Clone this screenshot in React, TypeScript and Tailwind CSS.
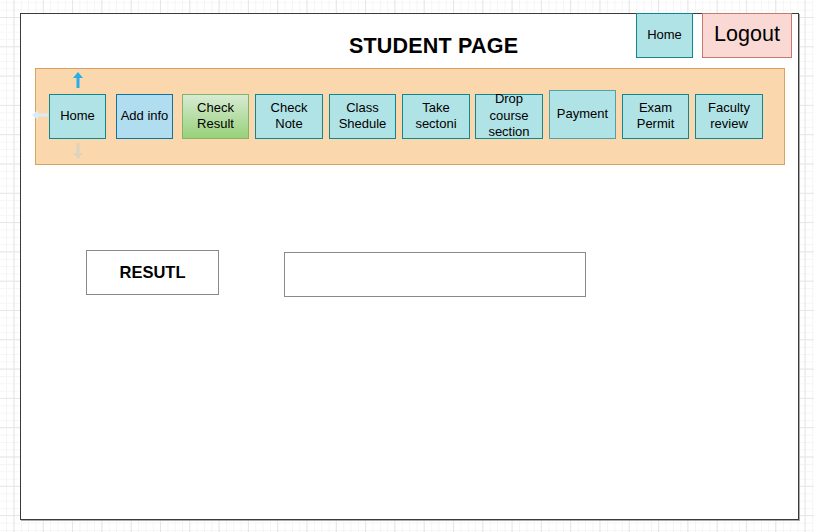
const NAV = [
  { label: "Home", cls: "ml-[13px] w-[57px] h-[45px] bg-[#b0e3e6] border-[#12868e]" },
  { label: "Add info", cls: "ml-[10px] w-[57px] h-[45px] bg-[#b1ddf0] border-[#10739e]" },
  {
    label: "Check\nResult",
    cls: "ml-[9px] w-[67px] h-[45px] bg-[linear-gradient(to_bottom,#d7ebd3,#98d17a)] border-[#82b366]",
  },
  { label: "Check\nNote", cls: "ml-[6px] w-[68px] h-[45px] bg-[#b0e3e6] border-[#12868e]" },
  { label: "Class\nShedule", cls: "ml-[6px] w-[67px] h-[45px] bg-[#b0e3e6] border-[#12868e]" },
  { label: "Take\nsectoni", cls: "ml-[6px] w-[68px] h-[45px] bg-[#b0e3e6] border-[#12868e]" },
  { label: "Drop\ncourse\nsection", cls: "ml-[5px] w-[68px] h-[45px] bg-[#b0e3e6] border-[#12868e]" },
  { label: "Payment", cls: "ml-[6px] w-[67px] h-[49px] bg-[#b0e3e6] border-[#4fa3a6]" },
  { label: "Exam\nPermit", cls: "ml-[6px] w-[67px] h-[45px] bg-[#b0e3e6] border-[#12868e]" },
  { label: "Faculty\nreview", cls: "ml-[6px] w-[68px] h-[45px] bg-[#b0e3e6] border-[#12868e]" },
];

function Arrow({ dir, color }: { dir: "up" | "down" | "left"; color: string }) {
  const rot = dir === "up" ? 0 : dir === "down" ? 180 : -90;
  return (
    <svg width="10" height="16" viewBox="0 0 10 16" style={{ transform: `rotate(${rot}deg)` }}>
      <path d="M5 0 L10 6 L6.5 6 L6.5 16 L3.5 16 L3.5 6 L0 6 Z" fill={color} />
    </svg>
  );
}

export default function App() {
  return (
    <div
      className="w-[814px] h-[532px] overflow-hidden bg-white font-['Liberation_Sans',Arial,sans-serif] text-black bg-[linear-gradient(to_right,#e6e6e6_1px,transparent_1px),linear-gradient(to_bottom,#e6e6e6_1px,transparent_1px),linear-gradient(to_right,#f5f5f5_1px,transparent_1px),linear-gradient(to_bottom,#f5f5f5_1px,transparent_1px)] bg-[size:29.3px_29.3px,29.3px_29.3px,7.33px_7.33px,7.33px_7.33px] bg-[position:13.5px_17px,13.5px_17px,13.5px_17px,13.5px_17px] pt-[13px] pl-[20px]"
    >
      <div className="relative w-[779px] h-[507px] bg-white border-[1.5px] border-[#3a3a3a] shadow-[1px_1px_0_#aaa]">
        {/* header */}
        <div className="flex items-start h-[44px] -mt-[1.5px]">
          <h1 className="ml-[328px] mt-[21px] text-[21.5px] leading-[24px] font-bold tracking-[0.2px]">
            STUDENT PAGE
          </h1>
          <button className="ml-auto w-[57px] h-[45px] bg-[#b0e3e6] border-[1.5px] border-[#12868e] text-[13px]">
            Home
          </button>
          <button className="ml-[9px] mr-[6px] w-[90px] h-[45px] bg-[#fad9d5] border-[1.5px] border-[#c9786e] text-[21.5px] leading-none">
            Logout
          </button>
        </div>

        {/* nav bar */}
        <div className="relative ml-[14px] mt-[11px] w-[750px] h-[97px] bg-[#fad7ac] border-[1.5px] border-[#d9a25f] flex items-end pb-[25px]">
          {NAV.map((n) => (
            <div
              key={n.label}
              className={`${n.cls} shrink-0 border-[1.5px] flex items-center justify-center text-center text-[13px] leading-[16.5px] whitespace-pre-line`}
            >
              {n.label}
            </div>
          ))}
          <div className="absolute left-[37px] top-[3px]">
            <Arrow dir="up" color="#2aaee9" />
          </div>
          <div className="absolute left-[37px] top-[74px]">
            <Arrow dir="down" color="#ddd3c0" />
          </div>
          <div className="absolute left-[-1px] top-[38px]">
            <Arrow dir="left" color="#d8edf7" />
          </div>
        </div>

        {/* result row */}
        <div className="flex items-start mt-[85px]">
          <div className="ml-[65px] w-[133px] h-[45px] border-[1.5px] border-[#8a8a8a] flex items-center justify-center text-[16.5px] font-bold">
            RESUTL
          </div>
          <div className="ml-[65px] mt-[2px] w-[302px] h-[45px] border-[1.5px] border-[#8a8a8a]" />
        </div>
      </div>
    </div>
  );
}
